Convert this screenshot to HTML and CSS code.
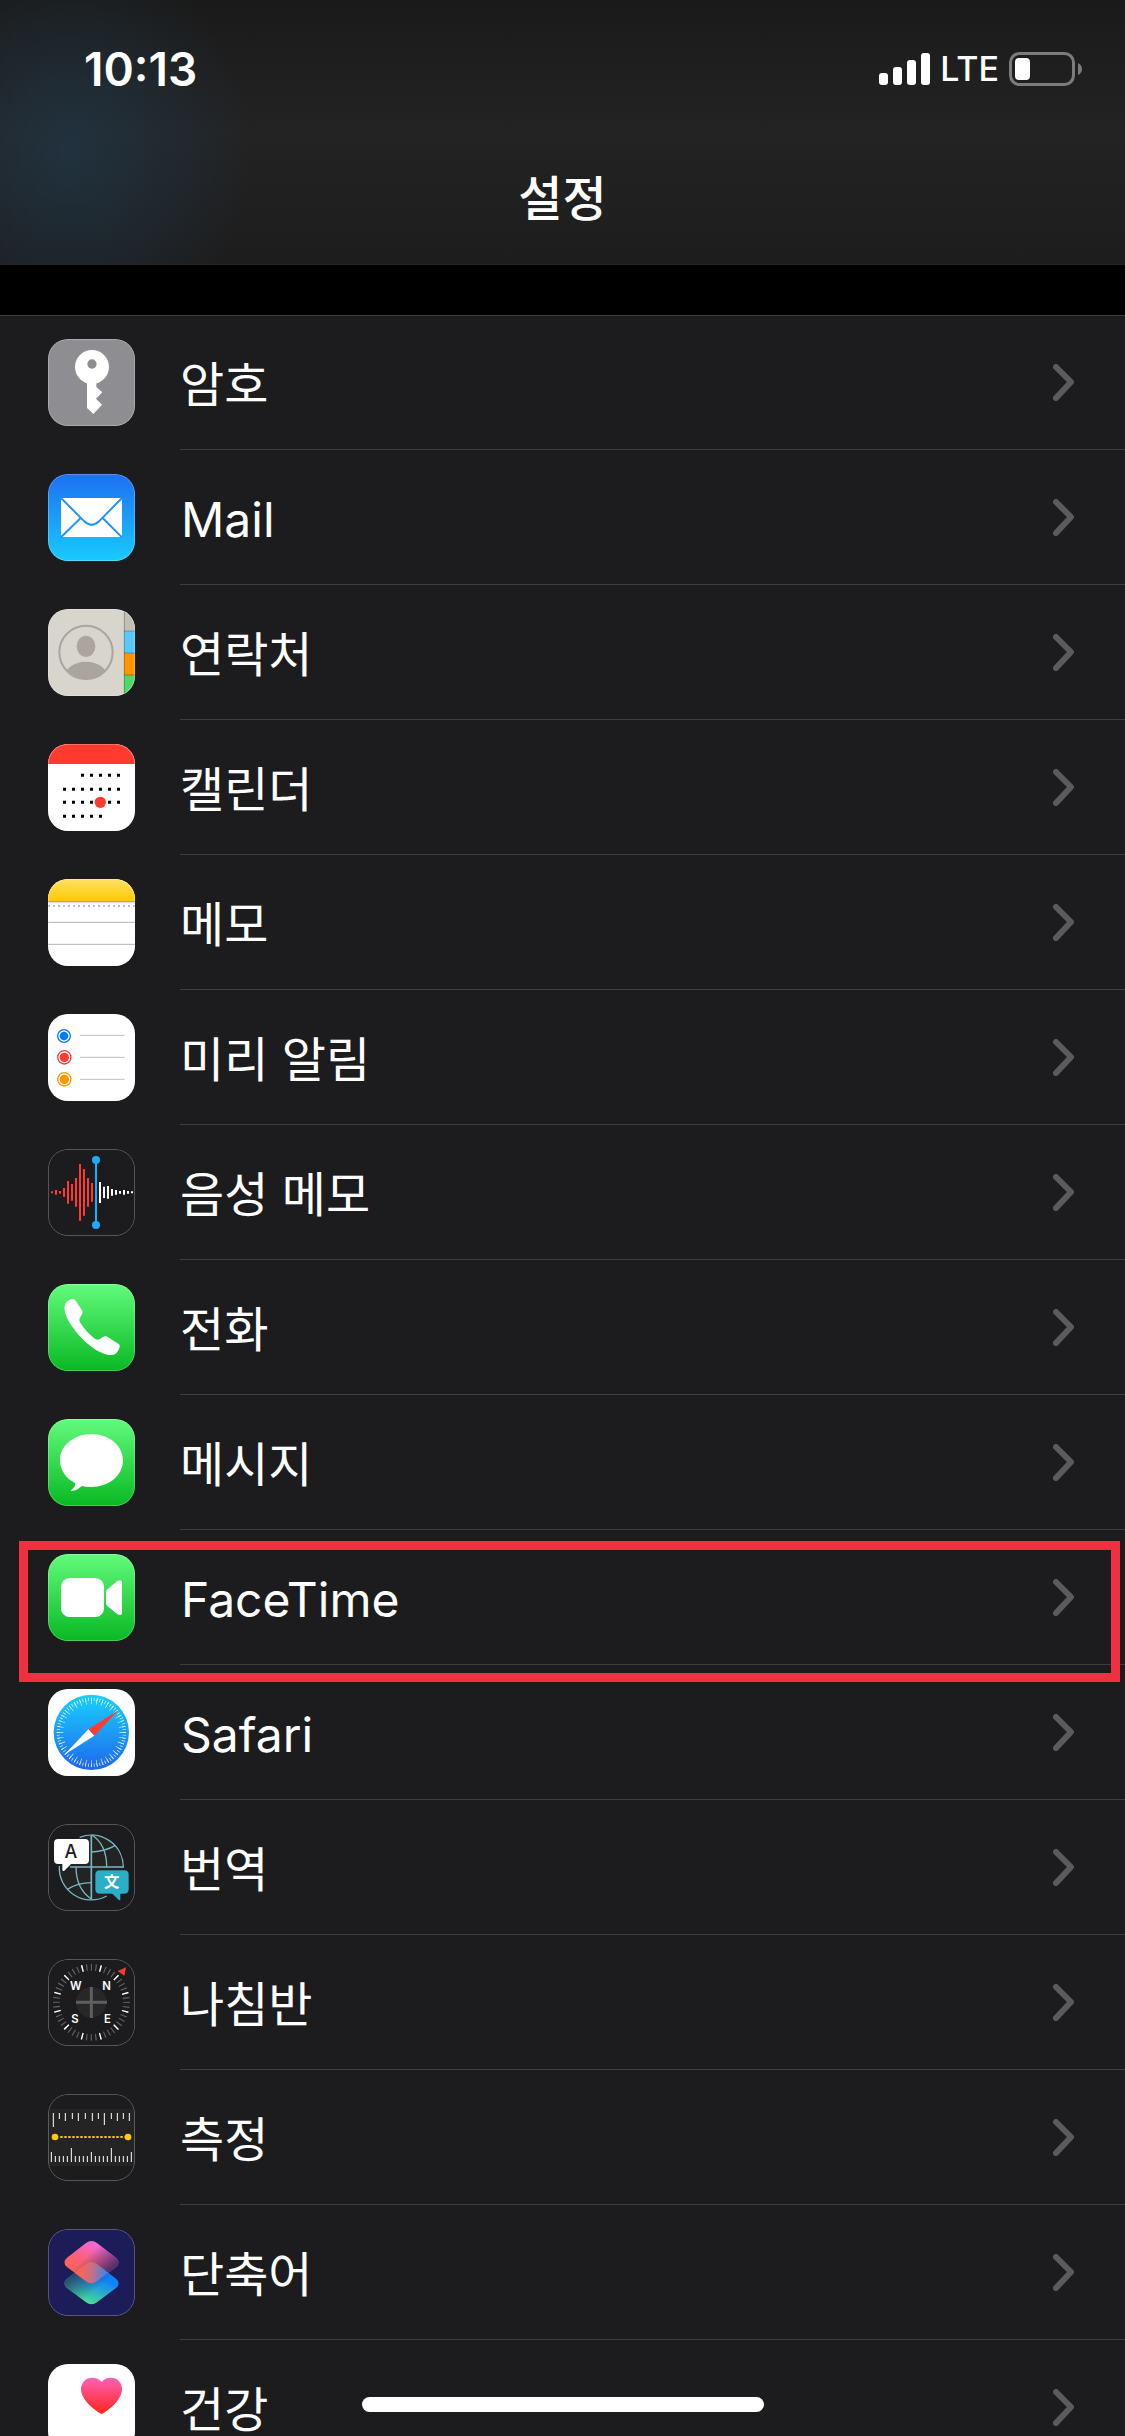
FILE: index.html
```html
<!DOCTYPE html>
<html lang="ko">
<head>
    <meta charset="UTF-8">
    <meta name="viewport" content="width=device-width, initial-scale=1.0">
    <title>설정</title>
    <link rel="stylesheet" href="styles.css">
</head>
<body>
    <svg class="defs" aria-hidden="true">
        <defs>
            <linearGradient id="green" x1="0" y1="0" x2="0" y2="1">
                <stop offset="0" stop-color="#62fb7c"/>
                <stop offset="1" stop-color="#09b823"/>
            </linearGradient>
            <linearGradient id="blue" x1="0" y1="0" x2="0" y2="1">
                <stop offset="0" stop-color="#1e6ff2"/>
                <stop offset="1" stop-color="#19cbfd"/>
            </linearGradient>
            <linearGradient id="dial" x1="0" y1="0" x2="0" y2="1">
                <stop offset="0" stop-color="#19d0fd"/>
                <stop offset="1" stop-color="#1f68ee"/>
            </linearGradient>
            <linearGradient id="yellow" x1="0" y1="0" x2="0" y2="1">
                <stop offset="0" stop-color="#ffe066"/>
                <stop offset="1" stop-color="#fecb00"/>
            </linearGradient>
            <linearGradient id="heart" x1="0" y1="0" x2="0" y2="1">
                <stop offset="0" stop-color="#fc62b8"/>
                <stop offset="1" stop-color="#ff2418"/>
            </linearGradient>
            <linearGradient id="pink" x1="0.1" y1="0.8" x2="0.6" y2="0">
                <stop offset="0" stop-color="#ff6848"/>
                <stop offset="0.45" stop-color="#fc5f78"/>
                <stop offset="1" stop-color="#f26ae2"/>
            </linearGradient>
            <linearGradient id="pinkshade" x1="0.5" y1="0.25" x2="0.9" y2="0.6">
                <stop offset="0" stop-color="#3a2860" stop-opacity="0"/>
                <stop offset="1" stop-color="#3a2860" stop-opacity="0.85"/>
            </linearGradient>
            <linearGradient id="aqua" x1="0.7" y1="0.4" x2="0.4" y2="1">
                <stop offset="0" stop-color="#0d82ff"/>
                <stop offset="1" stop-color="#4be28c"/>
            </linearGradient>
            <linearGradient id="aquashade" x1="0.1" y1="0.35" x2="0.5" y2="0.75">
                <stop offset="0" stop-color="#29405e" stop-opacity="0.9"/>
                <stop offset="1" stop-color="#29405e" stop-opacity="0"/>
            </linearGradient>
            <linearGradient id="mix" gradientUnits="userSpaceOnUse" x1="96" y1="130" x2="174" y2="140">
                <stop offset="0" stop-color="#f9655a"/>
                <stop offset="0.5" stop-color="#c2708a"/>
                <stop offset="1" stop-color="#3288f2"/>
            </linearGradient>
            <clipPath id="avatar"><circle cx="114" cy="130" r="80"/></clipPath>
            <rect id="frame" x="1" y="1" width="259" height="259" rx="59" fill="none" stroke="#fff" stroke-opacity="0.3" stroke-width="3"/>
            <path id="diamond" d="M113 43Q130 29 148 43L204 86Q220 100 204 114L148 156Q130 170 113 156L57 114Q41 100 57 86Z"/>
            <clipPath id="overlap"><use href="#diamond" transform="translate(0 63)"/></clipPath>
            <symbol id="chevron" viewBox="0 0 21 37">
                <path d="M3 3L18 18L3 34" fill="none" stroke="#5b5b5f" stroke-width="6" stroke-linecap="round" stroke-linejoin="round"/>
            </symbol>
        </defs>
    </svg>

    <div class="screen">
        <header class="header">
            <div class="status">
                <span class="time">10:13</span>
                <div class="indicators">
                    <svg class="signal" viewBox="0 0 51 32" fill="#fff">
                        <rect x="0" y="20" width="9" height="12" rx="3"/>
                        <rect x="14" y="14" width="9" height="18" rx="3"/>
                        <rect x="28" y="7" width="9" height="25" rx="3"/>
                        <rect x="42" y="0" width="9" height="32" rx="3"/>
                    </svg>
                    <span class="network">LTE</span>
                    <svg class="battery" viewBox="0 0 74 34">
                        <rect x="1.5" y="1.5" width="63" height="31" rx="9" fill="none" stroke="#7c7c7d" stroke-width="3"/>
                        <rect x="6" y="6" width="15" height="22" rx="4" fill="#fff"/>
                        <path d="M69 11q4 2 4 6t-4 6z" fill="#7c7c7d"/>
                    </svg>
                </div>
            </div>
            <h1 class="title">설정</h1>
        </header>

        <main class="content">
            <ul class="list">
                <li class="item">
                    <a class="row" href="#passwords">
                        <svg class="icon" viewBox="0 0 261 261">
                            <rect width="261" height="261" fill="#8e8d92"/>
                            <circle cx="132" cy="84" r="51" fill="#fff"/>
                            <path d="M117 125V207L136 225L162 197L144 179L163 160L145 144V125Z" fill="#fff"/>
                            <circle cx="132" cy="75" r="14" fill="#8e8d92"/>
                            <use href="#frame"/>
                        </svg>
                        <span class="label">암호</span>
                        <svg class="chevron"><use href="#chevron"/></svg>
                    </a>
                </li>
                <li class="item">
                    <a class="row" href="#mail">
                        <svg class="icon" viewBox="0 0 261 261">
                            <rect width="261" height="261" fill="url(#blue)"/>
                            <rect x="39" y="72" width="183" height="117" rx="4" fill="#fff"/>
                            <path d="M39 72L109 142Q131 163 153 142L222 72M98 132L39 190M164 132L222 190" fill="none" stroke="#2196f6" stroke-width="6"/>
                            <use href="#frame"/>
                        </svg>
                        <span class="label latin">Mail</span>
                        <svg class="chevron"><use href="#chevron"/></svg>
                    </a>
                </li>
                <li class="item">
                    <a class="row" href="#contacts">
                        <svg class="icon" viewBox="0 0 261 261">
                            <rect width="261" height="261" fill="#d8d5cc"/>
                            <rect x="228" y="0" width="33" height="66" fill="#c2bfb8"/>
                            <rect x="228" y="66" width="33" height="66" fill="#5ac8fa"/>
                            <rect x="228" y="132" width="33" height="66" fill="#ff9500"/>
                            <rect x="228" y="198" width="33" height="63" fill="#4cd964"/>
                            <path d="M229 0V261M228 66H261M228 132H261M228 198H261" stroke="#000" stroke-opacity="0.25" stroke-width="3"/>
                            <g fill="#aba49f" clip-path="url(#avatar)">
                                <ellipse cx="114" cy="112" rx="28" ry="32"/>
                                <ellipse cx="114" cy="208" rx="66" ry="50"/>
                            </g>
                            <circle cx="114" cy="130" r="80" fill="none" stroke="#aba49f" stroke-width="6"/>
                            <use href="#frame"/>
                        </svg>
                        <span class="label">연락처</span>
                        <svg class="chevron"><use href="#chevron"/></svg>
                    </a>
                </li>
                <li class="item">
                    <a class="row" href="#calendar">
                        <svg class="icon" viewBox="0 0 261 261">
                            <rect width="261" height="261" fill="#fff"/>
                            <rect width="261" height="60" fill="#ff3b30"/>
                            <g stroke="#000" stroke-width="9" stroke-dasharray="9 18">
                                <path d="M99 94H220"/>
                                <path d="M45 136H220"/>
                                <path d="M45 175H220"/>
                                <path d="M45 217H166"/>
                            </g>
                            <circle cx="157" cy="175" r="17" fill="#ff3b30"/>
                            <use href="#frame"/>
                        </svg>
                        <span class="label">캘린더</span>
                        <svg class="chevron"><use href="#chevron"/></svg>
                    </a>
                </li>
                <li class="item">
                    <a class="row" href="#notes">
                        <svg class="icon" viewBox="0 0 261 261">
                            <rect width="261" height="261" fill="#fff"/>
                            <rect width="261" height="67" fill="url(#yellow)"/>
                            <rect y="66" width="261" height="3" fill="#a8a49a"/>
                            <rect y="69" width="261" height="4" fill="#dedee0"/>
                            <path d="M0 81H261" stroke="#bcbcbf" stroke-width="6" stroke-dasharray="6 9"/>
                            <path d="M0 130H261M0 196H261" stroke="#b3b3b5" stroke-width="3"/>
                            <use href="#frame"/>
                        </svg>
                        <span class="label">메모</span>
                        <svg class="chevron"><use href="#chevron"/></svg>
                    </a>
                </li>
                <li class="item">
                    <a class="row" href="#reminders">
                        <svg class="icon" viewBox="0 0 261 261">
                            <rect width="261" height="261" fill="#fff"/>
                            <circle cx="48" cy="66" r="13" fill="#007aff"/>
                            <circle cx="48" cy="66" r="19" fill="none" stroke="#007aff" stroke-width="4"/>
                            <circle cx="49" cy="130" r="14" fill="#ff3b30"/>
                            <circle cx="49" cy="130" r="20" fill="none" stroke="#ff3b30" stroke-width="4"/>
                            <circle cx="49" cy="196" r="14" fill="#ff9500"/>
                            <circle cx="49" cy="196" r="20" fill="none" stroke="#ff9500" stroke-width="4"/>
                            <path d="M96 64H230M96 130H230M96 196H230" stroke="#c0c0c2" stroke-width="3"/>
                            <use href="#frame"/>
                        </svg>
                        <span class="label">미리 알림</span>
                        <svg class="chevron"><use href="#chevron"/></svg>
                    </a>
                </li>
                <li class="item">
                    <a class="row" href="#voice-memos">
                        <svg class="icon" viewBox="0 0 261 261">
                            <rect width="261" height="261" fill="#1c1c1e"/>
                            <path d="M12 127v6M24 123v14M36 126v8M48 117v26M60 96v68M72 105v50M84 87v86M96 45v170M108 60v140M120 87v86M132 102v56" stroke="#ff3b30" stroke-width="6"/>
                            <path d="M156 99v63M168 113v34M180 111v38M192 120v20M204 123v14M216 126v8M228 123v14M240 126v8M252 127v6" stroke="#fff" stroke-width="6"/>
                            <path d="M144 33V228" stroke="#1badf8" stroke-width="6"/>
                            <circle cx="144" cy="33" r="12" fill="#1badf8"/>
                            <circle cx="144" cy="228" r="12" fill="#1badf8"/>
                            <use href="#frame"/>
                        </svg>
                        <span class="label">음성 메모</span>
                        <svg class="chevron"><use href="#chevron"/></svg>
                    </a>
                </li>
                <li class="item">
                    <a class="row" href="#phone">
                        <svg class="icon" viewBox="0 0 261 261">
                            <rect width="261" height="261" fill="url(#green)"/>
                            <path d="M58 52C63 48 69 46 74 45Q79 44 82 49L102 79Q106 85 102 91L95 103Q92 109 96 115Q115 146 142 165Q148 169 154 166L166 158Q172 154 178 158L211 179Q217 183 215 189C213 198 208 205 202 210Q196 214 183 213C144 207 96 166 66 118C48 89 44 64 58 52Z" fill="#fff"/>
                            <use href="#frame"/>
                        </svg>
                        <span class="label">전화</span>
                        <svg class="chevron"><use href="#chevron"/></svg>
                    </a>
                </li>
                <li class="item">
                    <a class="row" href="#messages">
                        <svg class="icon" viewBox="0 0 261 261">
                            <rect width="261" height="261" fill="url(#green)"/>
                            <path d="M130 45C184 45 225 80 225 124C225 169 184 204 130 204Q115 204 101 201Q88 214 70 216Q67 215 71 212Q83 203 81 192C54 179 36 153 36 124C36 80 78 45 130 45Z" fill="#fff"/>
                            <use href="#frame"/>
                        </svg>
                        <span class="label">메시지</span>
                        <svg class="chevron"><use href="#chevron"/></svg>
                    </a>
                </li>
                <li class="item marked">
                    <a class="row" href="#facetime">
                        <svg class="icon" viewBox="0 0 261 261">
                            <rect width="261" height="261" fill="url(#green)"/>
                            <rect x="39" y="72" width="129" height="117" rx="26" fill="#fff"/>
                            <path d="M174 114Q174 109 178 106L208 81Q213 78 218 79Q222 80 222 85V177Q222 182 218 183Q213 184 208 181L178 156Q174 153 174 148Z" fill="#fff"/>
                            <use href="#frame"/>
                        </svg>
                        <span class="label latin">FaceTime</span>
                        <svg class="chevron"><use href="#chevron"/></svg>
                    </a>
                </li>
                <li class="item">
                    <a class="row" href="#safari">
                        <svg class="icon" viewBox="0 0 261 261">
                            <rect width="261" height="261" fill="#fff"/>
                            <circle cx="130" cy="130" r="113" fill="url(#dial)"/>
                            <circle cx="130" cy="130" r="99" fill="none" stroke="#fff" stroke-opacity="0.85" stroke-width="10" pathLength="288" stroke-dasharray="1 3" stroke-dashoffset="0.5"/>
                            <circle cx="130" cy="130" r="94" fill="none" stroke="#fff" stroke-opacity="0.85" stroke-width="20" pathLength="288" stroke-dasharray="1 7" stroke-dashoffset="0.5"/>
                            <path d="M211 64L121 121L139 140Z" fill="#ff3b30"/>
                            <path d="M49 197L121 121L139 140Z" fill="#fff"/>
                            <use href="#frame"/>
                        </svg>
                        <span class="label latin">Safari</span>
                        <svg class="chevron"><use href="#chevron"/></svg>
                    </a>
                </li>
                <li class="item">
                    <a class="row" href="#translate">
                        <svg class="icon" viewBox="0 0 261 261">
                            <rect width="261" height="261" fill="#1c1c1e"/>
                            <circle cx="130" cy="129" r="96" fill="#232323"/>
                            <g fill="none" stroke="#76b7c2" stroke-width="4">
                                <path d="M95 40A96 96 0 0 1 226 129M34 126A96 96 0 0 0 176 216"/>
                                <path d="M130 33V226M66 129H228" stroke-width="5"/>
                                <path d="M132 33Q176 62 176 129M132 84Q172 82 201 65"/>
                                <path d="M84 129Q84 194 130 225M58 196Q88 177 130 176"/>
                            </g>
                            <path d="M30 45H111Q123 45 123 57V108Q123 120 111 120H69L49 140Q43 143 43 136V120H30Q18 120 18 108V57Q18 45 30 45Z" fill="#fff"/>
                            <path d="M155 138H229Q243 138 243 152V196Q243 210 229 210H218V226Q218 233 212 229L193 210H155Q141 210 141 196V152Q141 138 155 138Z" fill="#2eadc7" stroke="#1c1c1e" stroke-width="2"/>
                            <text class="glyph-a" x="69" y="103">A</text>
                            <text class="glyph-wen" x="191" y="190">文</text>
                            <use href="#frame"/>
                        </svg>
                        <span class="label">번역</span>
                        <svg class="chevron"><use href="#chevron"/></svg>
                    </a>
                </li>
                <li class="item">
                    <a class="row" href="#compass">
                        <svg class="icon" viewBox="0 0 261 261">
                            <rect width="261" height="261" fill="#1c1c1e"/>
                            <circle cx="130" cy="130" r="105" fill="none" stroke="#626264" stroke-width="20" pathLength="192" stroke-dasharray="1 3" stroke-dashoffset="0.5"/>
                            <circle cx="130" cy="130" r="105" fill="none" stroke="#fff" stroke-width="20" pathLength="192" stroke-dasharray="1.2 14.8" stroke-dashoffset="8.6"/>
                            <circle cx="130" cy="130" r="46" fill="#272728"/>
                            <path d="M130 84V177M84 130H177" stroke="#5f5f61" stroke-width="9"/>
                            <path d="M209 36L234 25L229 50Z" fill="#ff3b30"/>
                            <g class="points">
                                <text x="83" y="93">W</text>
                                <text x="176" y="93">N</text>
                                <text x="81" y="192">S</text>
                                <text x="178" y="192">E</text>
                            </g>
                            <use href="#frame"/>
                        </svg>
                        <span class="label">나침반</span>
                        <svg class="chevron"><use href="#chevron"/></svg>
                    </a>
                </li>
                <li class="item">
                    <a class="row" href="#measure">
                        <svg class="icon" viewBox="0 0 261 261">
                            <rect width="261" height="261" fill="#1c1c1e"/>
                            <rect y="45" width="261" height="171" fill="#242425"/>
                            <path d="M16 57v42M34 57v18M52 57v24M73 57v18M91 57v24M112 57v18M133 57v24M151 57v18M169 57v36M190 57v18M208 57v24M226 57v18M244 57v24" stroke="#fff" stroke-width="3"/>
                            <path d="M10 204v-30M22 204v-18M34 204v-18M46 204v-18M58 204v-18M70 204v-42M82 204v-18M94 204v-18M106 204v-18M118 204v-18M130 204v-30M142 204v-18M154 204v-18M166 204v-18M178 204v-18M190 204v-42M202 204v-18M214 204v-18M226 204v-18M238 204v-18M250 204v-30" stroke="#fff" stroke-width="3"/>
                            <path d="M37 129H230" stroke="#fecb00" stroke-width="6" stroke-dasharray="7 5"/>
                            <circle cx="21" cy="129" r="10" fill="#fecb00"/>
                            <circle cx="240" cy="129" r="10" fill="#fecb00"/>
                            <use href="#frame"/>
                        </svg>
                        <span class="label">측정</span>
                        <svg class="chevron"><use href="#chevron"/></svg>
                    </a>
                </li>
                <li class="item">
                    <a class="row" href="#shortcuts">
                        <svg class="icon" viewBox="0 0 261 261">
                            <rect width="261" height="261" fill="#1c1d58"/>
                            <g transform="translate(0 63)">
                                <use href="#diamond" fill="url(#aqua)"/>
                                <use href="#diamond" fill="url(#aquashade)"/>
                            </g>
                            <use href="#diamond" fill="url(#pink)"/>
                            <use href="#diamond" fill="url(#pinkshade)"/>
                            <g clip-path="url(#overlap)">
                                <use href="#diamond" fill="url(#mix)"/>
                            </g>
                            <use href="#frame"/>
                        </svg>
                        <span class="label">단축어</span>
                        <svg class="chevron"><use href="#chevron"/></svg>
                    </a>
                </li>
                <li class="item">
                    <a class="row" href="#health">
                        <svg class="icon" viewBox="0 0 261 261">
                            <rect width="261" height="261" fill="#fff"/>
                            <path d="M161 150C158 150 99 115 99 76C99 55 114 41 132 41Q151 41 161 54Q171 41 189 41C208 41 222 55 222 76C222 115 164 150 161 150Z" fill="url(#heart)"/>
                            <use href="#frame"/>
                        </svg>
                        <span class="label">건강</span>
                        <svg class="chevron"><use href="#chevron"/></svg>
                    </a>
                </li>
            </ul>
        </main>

        <div class="home-bar"></div>
    </div>
</body>
</html>
```

FILE: styles.css
```css
* {
    box-sizing: border-box;
}
body {
    margin: 0;
    background: #000;
    color: #fff;
    font-family: "Noto Sans CJK KR", sans-serif;
}
.defs {
    position: absolute;
    width: 0;
    height: 0;
}
.screen {
    position: relative;
    display: flex;
    flex-direction: column;
    height: 100vh;
    overflow: hidden;
}

/* header */
.header {
    flex: none;
    border-bottom: 1px solid #262627;
    background:
        radial-gradient(ellipse 180px 200px at 70px 150px, rgba(32, 60, 80, 0.6), rgba(32, 60, 80, 0)),
        linear-gradient(#1a1a1a, #232324 50%, #1d1d1e);
}
.status {
    display: flex;
    justify-content: space-between;
    align-items: center;
    height: 132px;
    padding: 6px 42px 0 84px;
    font-family: Inter, sans-serif;
}
.time {
    font-size: 46px;
    font-weight: 600;
}
.indicators {
    display: flex;
    align-items: center;
    gap: 10px;
}
.signal {
    width: 51px;
    height: 32px;
}
.network {
    font-size: 34px;
    font-weight: 500;
    line-height: 32px;
}
.battery {
    width: 74px;
    height: 34px;
}
.title {
    margin: 0;
    height: 132px;
    font-size: 48px;
    font-weight: 500;
    line-height: 126px;
    text-align: center;
}

/* list */
.content {
    flex: 1;
    overflow-y: auto;
    padding-top: 50px;
    scrollbar-width: none;
}
.list {
    margin: 0;
    padding: 0;
    list-style: none;
    background: #1c1c1e;
    box-shadow: inset 0 1px #3d3d40;
}
.item {
    position: relative;
}
.row {
    position: relative;
    display: grid;
    grid-template-columns: 87px 1fr 21px;
    column-gap: 45px;
    align-items: center;
    height: 135px;
    padding: 0 51px 0 48px;
    color: #fff;
    text-decoration: none;
}
.row::after {
    content: "";
    position: absolute;
    left: 180px;
    right: 0;
    bottom: 0;
    height: 1px;
    background: #3d3d40;
}
.icon {
    display: block;
    width: 87px;
    height: 87px;
    border-radius: 20px;
}
.label {
    padding-bottom: 4px;
    font-size: 48px;
    font-weight: 400;
    line-height: 72px;
}
.latin {
    padding: 4px 0 0 1px;
    font-family: Inter, sans-serif;
}
.chevron {
    width: 21px;
    height: 37px;
}
.marked::after {
    content: "";
    position: absolute;
    z-index: 1;
    top: 11px;
    right: 5px;
    bottom: -17px;
    left: 19px;
    border: 9px solid #ee3040;
    pointer-events: none;
}

/* letters inside the icons */
.icon text {
    font-family: Inter, sans-serif;
    text-anchor: middle;
}
.glyph-a {
    fill: #1c1c1e;
    font-size: 54px;
    font-weight: 500;
}
.icon .glyph-wen {
    fill: #fff;
    font-family: "Noto Sans CJK SC", sans-serif;
    font-size: 46px;
    font-weight: 700;
}
.points {
    fill: #fff;
    font-size: 34px;
    font-weight: 600;
}

.home-bar {
    position: absolute;
    bottom: 24px;
    left: 50%;
    width: 402px;
    height: 15px;
    border-radius: 8px;
    background: #fff;
    transform: translateX(-50%);
}
```
